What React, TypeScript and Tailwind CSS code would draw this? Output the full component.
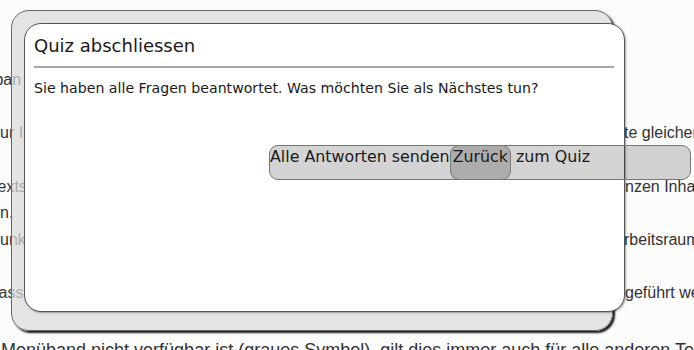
const lines = [
  { left: "ban", shift: "-ml-[5.6px]", width: "w-[624px]", right: "" },
  { left: "", shift: "", width: "w-[624px]", right: "" },
  { left: "ur Inhalte", shift: "ml-0", width: "w-[624px]", right: "te gleichen Inhalte" },
  { left: "", shift: "", width: "w-[624px]", right: "" },
  { left: "exts", shift: "-ml-[2.5px]", width: "w-[625px]", right: "nzen Inhalt" },
  { left: "n.", shift: "ml-0", width: "w-[624px]", right: "" },
  { left: "unktion", shift: "ml-0", width: "w-[624px]", right: "rbeitsraum" },
  { left: "", shift: "", width: "w-[624px]", right: "" },
  { left: "ass", shift: "-ml-[1.5px]", width: "w-[625px]", right: "geführt werden" },
  { left: "", shift: "", width: "w-[624px]", right: "" },
];

function PageLine({ left, shift, width, right }: { left: string; shift: string; width: string; right: string }) {
  return (
    <div className="flex h-[26.67px] whitespace-nowrap text-[16px] leading-[26.67px]">
      <div className={`shrink-0 overflow-hidden ${width}`}>
        <span className={`block ${shift}`}>{left}</span>
      </div>
      <span>{right}</span>
    </div>
  );
}

function QuizDialog() {
  return (
    <div className="absolute left-[11px] top-[10px]">
      <div className="h-[321px] w-[602px] rounded-[18px] border border-[#666] bg-[rgba(218,218,218,0.71)] pl-[12px] pt-[12px] shadow-[2px_2px_2px_rgba(0,0,0,0.9)]">
        <div className="h-[289px] w-[601px] rounded-[17px] border border-[#555] bg-white pl-[9px] pr-[10px] pt-[11px] font-['DejaVu_Sans',Verdana,sans-serif] text-[#1a1a1a] shadow-[1px_1px_2px_rgba(0,0,0,0.35)]">
          <h2 className="text-[18px] leading-[21px]">Quiz abschliessen</h2>
          <div className="mt-[10px] h-[2px] bg-[#a8a8a8]" />
          <p className="mt-[12px] text-[14.15px] leading-[16px]">
            Sie haben alle Fragen beantwortet. Was möchten Sie als Nächstes tun?
          </p>
          <div className="ml-[235px] mt-[49px] flex h-[35px] w-[422px] items-start whitespace-nowrap rounded-[9px] border border-[#777] bg-[rgba(0,0,0,0.17)] text-[15.85px] leading-[19px]">
            <span className="pt-[1.3px]">Alle Antworten senden</span>
            <span className="-mt-px h-[35px] rounded-[9px] border border-[#777] bg-[#adadad] px-[2px] pt-[1.3px]">
              Zurück
            </span>
            <span className="whitespace-pre pt-[1.3px]"> zum Quiz</span>
          </div>
        </div>
      </div>
    </div>
  );
}

export default function App() {
  return (
    <div className="relative h-[350px] w-[694px] overflow-hidden bg-[#fcfcfc] font-['Liberation_Sans',Arial,sans-serif] text-[#333]">
      <div className="pt-[67px]">
        {lines.map((l, i) => (
          <PageLine key={i} {...l} />
        ))}
        <div className="whitespace-nowrap pl-[1px] text-[18px] leading-[32px]">
          Menüband nicht verfügbar ist (graues Symbol), gilt dies immer auch für alle anderen Teile
        </div>
      </div>
      <QuizDialog />
    </div>
  );
}
